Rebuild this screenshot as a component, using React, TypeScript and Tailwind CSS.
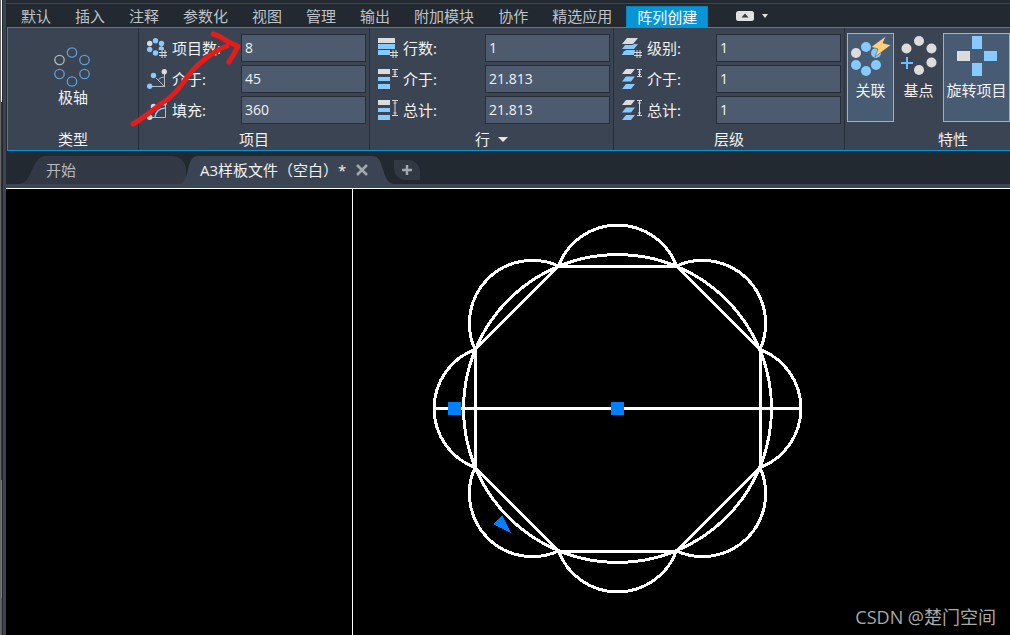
import type { ReactNode } from 'react';

const GRAY = '#dcdcdc';
const BLUE = '#86caff';

const menuTabs = ['默认', '插入', '注释', '参数化', '视图', '管理', '输出', '附加模块', '协作', '精选应用'];

function Hash() {
  return <path d="M15 12v8M18 12v8M12 14.5h8M12 17.5h8" stroke={GRAY} strokeWidth="1" />;
}

function SmallIcon({ children }: { children: ReactNode }) {
  return (
    <svg width="20" height="20" viewBox="0 0 20 20" fill="none" className="shrink-0" aria-hidden="true">
      {children}
    </svg>
  );
}

function ItemCountIcon() {
  return (
    <SmallIcon>
      <circle cx="2.7" cy="5.5" r="2.7" fill={GRAY} />
      <circle cx="8.5" cy="2.7" r="2.7" fill={BLUE} />
      <circle cx="14.5" cy="5.5" r="2.7" fill={BLUE} />
      <circle cx="2.7" cy="11.5" r="2.7" fill={BLUE} />
      <circle cx="14.3" cy="11" r="2.7" fill={BLUE} />
      <circle cx="8.5" cy="15" r="2.7" fill={BLUE} />
      <path d="M12 12h8v8h-8z" fill="#3b4453" />
      <Hash />
    </SmallIcon>
  );
}

function ItemAngleIcon() {
  return (
    <SmallIcon>
      <path d="M17.5 5v12.5H5M9 9l8.5 8.5" stroke="#b9bec5" />
      <path d="M11.5 10.5Q14 8 17 8" stroke={BLUE} />
      <circle cx="17.3" cy="2.7" r="2.7" fill={GRAY} />
      <circle cx="6.5" cy="6.5" r="2.7" fill={BLUE} />
      <circle cx="2.7" cy="17.3" r="2.7" fill={BLUE} />
    </SmallIcon>
  );
}

function ItemFillIcon() {
  return (
    <SmallIcon>
      <path d="M18.5 4v13.5H5" stroke="#b9bec5" />
      <path d="M8 17Q9 9 18 8" stroke={BLUE} strokeWidth="1.5" />
      <circle cx="17.3" cy="2.7" r="2.7" fill={GRAY} />
      <circle cx="6.5" cy="6.5" r="2.7" fill={GRAY} />
      <circle cx="2.7" cy="17.3" r="2.7" fill={GRAY} />
    </SmallIcon>
  );
}

function RowCountIcon() {
  return (
    <SmallIcon>
      <path d="M0 0h17v5H0z" fill={GRAY} />
      <path d="M0 6h17v5H0zM0 12h12v5H0z" fill={BLUE} />
      <Hash />
    </SmallIcon>
  );
}

function RowGapIcon() {
  return (
    <SmallIcon>
      <path d="M0 0h12v5H0z" fill={GRAY} />
      <path d="M0 8h12v4H0zM0 15h12v5H0z" fill={BLUE} />
      <path d="M14 .5h6M14 7.5h6M17 0v8M15.5 3h3M15.5 5.5h3" stroke={GRAY} />
    </SmallIcon>
  );
}

function RowTotalIcon() {
  return (
    <SmallIcon>
      <path d="M0 0h12v5H0z" fill={GRAY} />
      <path d="M0 8h12v4H0zM0 15h12v5H0z" fill={BLUE} />
      <path d="M14 .5h6M14 15.5h6M17 0v16M15.5 3h3M15.5 13h3" stroke={GRAY} />
    </SmallIcon>
  );
}

function LevelCountIcon() {
  return (
    <SmallIcon>
      <path d="M5 0h11l-5 6H0z" fill={GRAY} />
      <path d="M12 6h4l-4 5H0l3-4h8zM2 13h10v4H0z" fill={BLUE} />
      <path d="M0 17l4-5h9l-1 5z" fill={BLUE} />
      <Hash />
    </SmallIcon>
  );
}

function LevelGapIcon() {
  return (
    <SmallIcon>
      <path d="M4 0h9l-4 5H0z" fill={GRAY} />
      <path d="M4 7.5h9l-4 5H0zM4 15h9l-4 5H0z" fill={BLUE} />
      <path d="M15 .5h5M15 7.5h5M17.5 0v8M16 3h3M16 5.5h3" stroke={GRAY} />
    </SmallIcon>
  );
}

function LevelTotalIcon() {
  return (
    <SmallIcon>
      <path d="M4 0h9l-4 5H0z" fill={GRAY} />
      <path d="M4 7.5h9l-4 5H0zM4 15h9l-4 5H0z" fill={BLUE} />
      <path d="M15 .5h5M15 15.5h5M17.5 0v16M16 3h3M16 13h3" stroke={GRAY} />
    </SmallIcon>
  );
}

function PolarIcon() {
  return (
    <svg width="38" height="40" viewBox="0 0 38 40" fill="none" stroke="#5e9fd4" strokeWidth="1.3" aria-hidden="true">
      <circle cx="5.5" cy="13" r="4.7" stroke="#b4b8bd" />
      <circle cx="18" cy="5.5" r="4.7" />
      <circle cx="30.5" cy="13" r="4.7" />
      <circle cx="5.5" cy="27" r="4.7" />
      <circle cx="30.5" cy="27" r="4.7" />
      <circle cx="18" cy="34.5" r="4.7" />
    </svg>
  );
}

function AssociativeIcon() {
  return (
    <svg width="40" height="40" viewBox="0 0 40 40" fill={BLUE} aria-hidden="true">
      <circle cx="5" cy="17" r="5" fill={GRAY} />
      <circle cx="15" cy="11" r="5" />
      <circle cx="25" cy="17" r="5" />
      <circle cx="5" cy="29" r="5" />
      <circle cx="25" cy="29" r="5" />
      <circle cx="15" cy="35" r="5" />
      <path d="M35 0L20 11l7 2-3 8 16-12-8-2z" fill="#ffcf77" stroke="#475b73" strokeWidth=".6" />
    </svg>
  );
}

function BasePointIcon() {
  return (
    <svg width="36" height="40" viewBox="0 0 36 40" fill={GRAY} aria-hidden="true">
      <circle cx="18" cy="5" r="5" />
      <circle cx="5.5" cy="12.5" r="5" />
      <circle cx="30.5" cy="12.5" r="5" />
      <circle cx="30.5" cy="26.5" r="5" />
      <circle cx="18" cy="34" r="5" />
      <path d="M6 21v12M0 27h12" stroke="#6fbcff" strokeWidth="2" />
    </svg>
  );
}

function RotateItemsIcon() {
  return (
    <svg width="40" height="40" viewBox="0 0 40 40" aria-hidden="true">
      <path d="M15 0h10v13H15zM27 15h13v10H27zM15 27h10v13H15z" fill={BLUE} />
      <path d="M0 15h13v10H0z" fill={GRAY} />
    </svg>
  );
}

function Field({ id, icon, label, value }: { id: string; icon: ReactNode; label: string; value: string }) {
  return (
    <div className="flex items-center justify-between">
      <label htmlFor={id} className="flex items-center gap-[5px]">
        {icon}
        <span>{label}</span>
      </label>
      <input
        id={id}
        type="text"
        defaultValue={value}
        className="h-7 w-[125px] border border-[#262e39] bg-[#4e5a6d] px-[3px] pb-0.5 text-sm text-[#f0f2f4] outline-none"
      />
    </div>
  );
}

function Panel({ title, className, children }: { title: ReactNode; className: string; children: ReactNode }) {
  return (
    <section className={`flex shrink-0 flex-col justify-between border-r border-[#262e39] ${className}`}>
      {children}
      <h2 className="flex h-[22px] items-center justify-center gap-2">{title}</h2>
    </section>
  );
}

function Ribbon() {
  return (
    <div className="relative ml-px flex h-[124px] overflow-hidden border-y border-l border-[#0696d7] bg-[#3b4453] text-[15px] leading-5 text-[#f0f2f4]">
      <Panel title="类型" className="w-[131px]">
        <button type="button" className="mt-[19px] flex flex-col items-center">
          <PolarIcon />
          <span>极轴</span>
        </button>
      </Panel>
      <Panel title="项目" className="w-[231px]">
        <div className="flex flex-col gap-[3px] pt-1.5 pr-[3px] pl-2">
          <Field id="item-count" icon={<ItemCountIcon />} label="项目数:" value="8" />
          <Field id="item-between" icon={<ItemAngleIcon />} label="介于:" value="45" />
          <Field id="item-fill" icon={<ItemFillIcon />} label="填充:" value="360" />
        </div>
      </Panel>
      <Panel
        title={
          <>
            行
            <svg width="10" height="5" viewBox="0 0 10 5" aria-hidden="true">
              <path d="M0 0h10L5 5z" fill="#e4e4e4" />
            </svg>
          </>
        }
        className="w-[244px]"
      >
        <div className="flex flex-col gap-[3px] pt-1.5 pr-[3px] pl-2">
          <Field id="row-count" icon={<RowCountIcon />} label="行数:" value="1" />
          <Field id="row-between" icon={<RowGapIcon />} label="介于:" value="21.813" />
          <Field id="row-total" icon={<RowTotalIcon />} label="总计:" value="21.813" />
        </div>
      </Panel>
      <Panel title="层级" className="w-[231px]">
        <div className="flex flex-col gap-[3px] pt-1.5 pr-[3px] pl-2">
          <Field id="level-count" icon={<LevelCountIcon />} label="级别:" value="1" />
          <Field id="level-between" icon={<LevelGapIcon />} label="介于:" value="1" />
          <Field id="level-total" icon={<LevelTotalIcon />} label="总计:" value="1" />
        </div>
      </Panel>
      <Panel title="特性" className="min-w-[217px] grow">
        <div className="flex pt-[5px] pl-0.5">
          <button type="button" className="flex h-[89px] w-[47px] flex-col items-center border border-[#6fbcff] bg-[#475b73] pt-0.5">
            <AssociativeIcon />
            <span className="mt-1">关联</span>
          </button>
          <button type="button" className="flex h-[89px] w-[49px] flex-col items-center border border-transparent pt-0.5">
            <BasePointIcon />
            <span className="mt-1">基点</span>
          </button>
          <button type="button" className="flex h-[89px] w-[67px] flex-col items-center border border-[#6fbcff] bg-[#475b73] pt-0.5">
            <RotateItemsIcon />
            <span className="mt-1 whitespace-nowrap">旋转项目</span>
          </button>
        </div>
      </Panel>

      {/* hand-drawn arrow pointing at the item count */}
      <svg
        width="120"
        height="104"
        viewBox="0 0 120 104"
        fill="none"
        stroke="#e51c1a"
        strokeWidth="5"
        strokeLinecap="round"
        strokeLinejoin="round"
        className="pointer-events-none absolute top-0 left-[120px]"
        aria-hidden="true"
      >
        <path d="M5 96C18 89 26 80 40 71C55 59 57 49 69 38C79 29 87 22 99 18" />
        <path d="M85 6C94 8 98 14 110 18C108 23 105 27 101 34" />
      </svg>
    </div>
  );
}

function MenuBar() {
  return (
    <nav className="flex h-6 items-end border-t border-[#3b4453] pl-[3px] text-[15px] leading-5 text-[#bfc3c8]">
      {menuTabs.map((tab) => (
        <button key={tab} type="button" className="h-[21px] shrink-0 px-3 pb-0.5">
          {tab}
        </button>
      ))}
      <button type="button" className="ml-0.5 h-[21px] shrink-0 border border-b-0 border-[#0a82ba] bg-[#0696d7] px-2.5 pb-0.5 text-white">
        阵列创建
      </button>
      <button type="button" aria-label="最小化" className="ml-7 flex h-[21px] items-center gap-2 pb-0.5">
        <svg width="18" height="10" viewBox="0 0 18 10" aria-hidden="true">
          <rect width="18" height="10" rx="2.5" fill="#e1e1e1" />
          <path d="M9 2.5l3.5 4h-7z" fill="#333b46" />
        </svg>
        <svg width="6" height="4" viewBox="0 0 6 4" aria-hidden="true">
          <path d="M0 0h6L3 4z" fill="#e1e1e1" />
        </svg>
      </button>
    </nav>
  );
}

function FileTabs() {
  return (
    <div className="flex h-[37px] items-end overflow-hidden border-b-4 border-[#3b4453] pl-3 text-[15px] leading-5">
      <svg width="28" height="28" viewBox="0 0 28 28" className="shrink-0" aria-hidden="true">
        <path d="M0 28C16 28 12 0 28 0V28Z" fill="#323944" />
      </svg>
      <button type="button" className="h-7 w-[140px] rounded-tr-[14px] bg-[#323944] text-left text-[#b4b9be]">
        开始
      </button>
      <svg width="16" height="28" viewBox="0 0 16 28" className="-ml-1 shrink-0" aria-hidden="true">
        <path d="M0 28C8 22 4 0 16 0V28Z" fill="#3b4453" />
      </svg>
      <div className="flex h-7 items-center gap-2.5 bg-[#3b4453] pr-1 pl-0.5 text-[#f0f2f4]">
        <button type="button">A3样板文件（空白）*</button>
        <button type="button" aria-label="关闭">
          <svg width="12" height="12" viewBox="0 0 12 12" aria-hidden="true">
            <path d="M1 1l10 10M11 1L1 11" stroke="#a3a8af" strokeWidth="2.5" />
          </svg>
        </button>
      </div>
      <svg width="22" height="28" viewBox="0 0 22 28" className="shrink-0" aria-hidden="true">
        <path d="M0 0C14 0 8 26 22 28H0Z" fill="#3b4453" />
      </svg>
      <button type="button" aria-label="新建" className="mb-1 flex h-5 w-[26px] items-center justify-center rounded-tr-xl rounded-bl-xl bg-[#323944]">
        <svg width="10" height="10" viewBox="0 0 10 10" aria-hidden="true">
          <path d="M5 0v10M0 5h10" stroke="#a3a8af" strokeWidth="2.5" />
        </svg>
      </button>
    </div>
  );
}

const petals = [0, 45, 90, 135, 180, 225, 270, 315];

function PolarDrawing() {
  return (
    <svg
      width="371"
      height="371"
      viewBox="-185.5 -185.5 371 371"
      fill="none"
      stroke="#fff"
      strokeWidth="3"
      shapeRendering="crispEdges"
      aria-label="极轴阵列"
    >
      <circle r="154" />
      {petals.map((angle) => (
        <g key={angle} transform={`rotate(${angle})`}>
          <path d="M142.5 -59A63 63 0 0 1 142.5 59Z" />
        </g>
      ))}
      <path d="M-183 0H183" />
      <path d="M-169.5 -6.5h13v13h-13zM-6.5 -6.5h13v13h-13zM-115 107l-9.5 8.5 18 9z" fill="#0080ff" stroke="none" />
    </svg>
  );
}

export default function App() {
  return (
    <div className="flex min-h-screen overflow-hidden bg-[#222931] font-['Open_Sans','Noto_Sans_CJK_SC',sans-serif]">
      {/* edge of the window behind */}
      <div className="flex w-1.5 shrink-0 border-r-3 border-[#3b4453]">
        <div className="w-px bg-[#666]" />
        <div className="flex w-px flex-col">
          <div className="h-[102px] bg-white" />
          <div className="h-[378px] bg-[#2c333b]" />
          <div className="h-[118px] bg-[#e04a3f]" />
          <div className="grow bg-[#555b62]" />
        </div>
      </div>

      <div className="flex min-w-0 grow flex-col">
        <header className="pt-[3px]">
          <MenuBar />
          <Ribbon />
          <FileTabs />
        </header>
        <main className="relative flex grow border-t border-white bg-black">
          <div className="w-[347px] shrink-0 border-r border-white" />
          <div className="pt-[34px] pl-[79px]">
            <PolarDrawing />
          </div>
          <p className="absolute right-3.5 bottom-1.5 text-lg leading-6 text-[#a9a9a9]">CSDN @楚门空间</p>
        </main>
      </div>
    </div>
  );
}
